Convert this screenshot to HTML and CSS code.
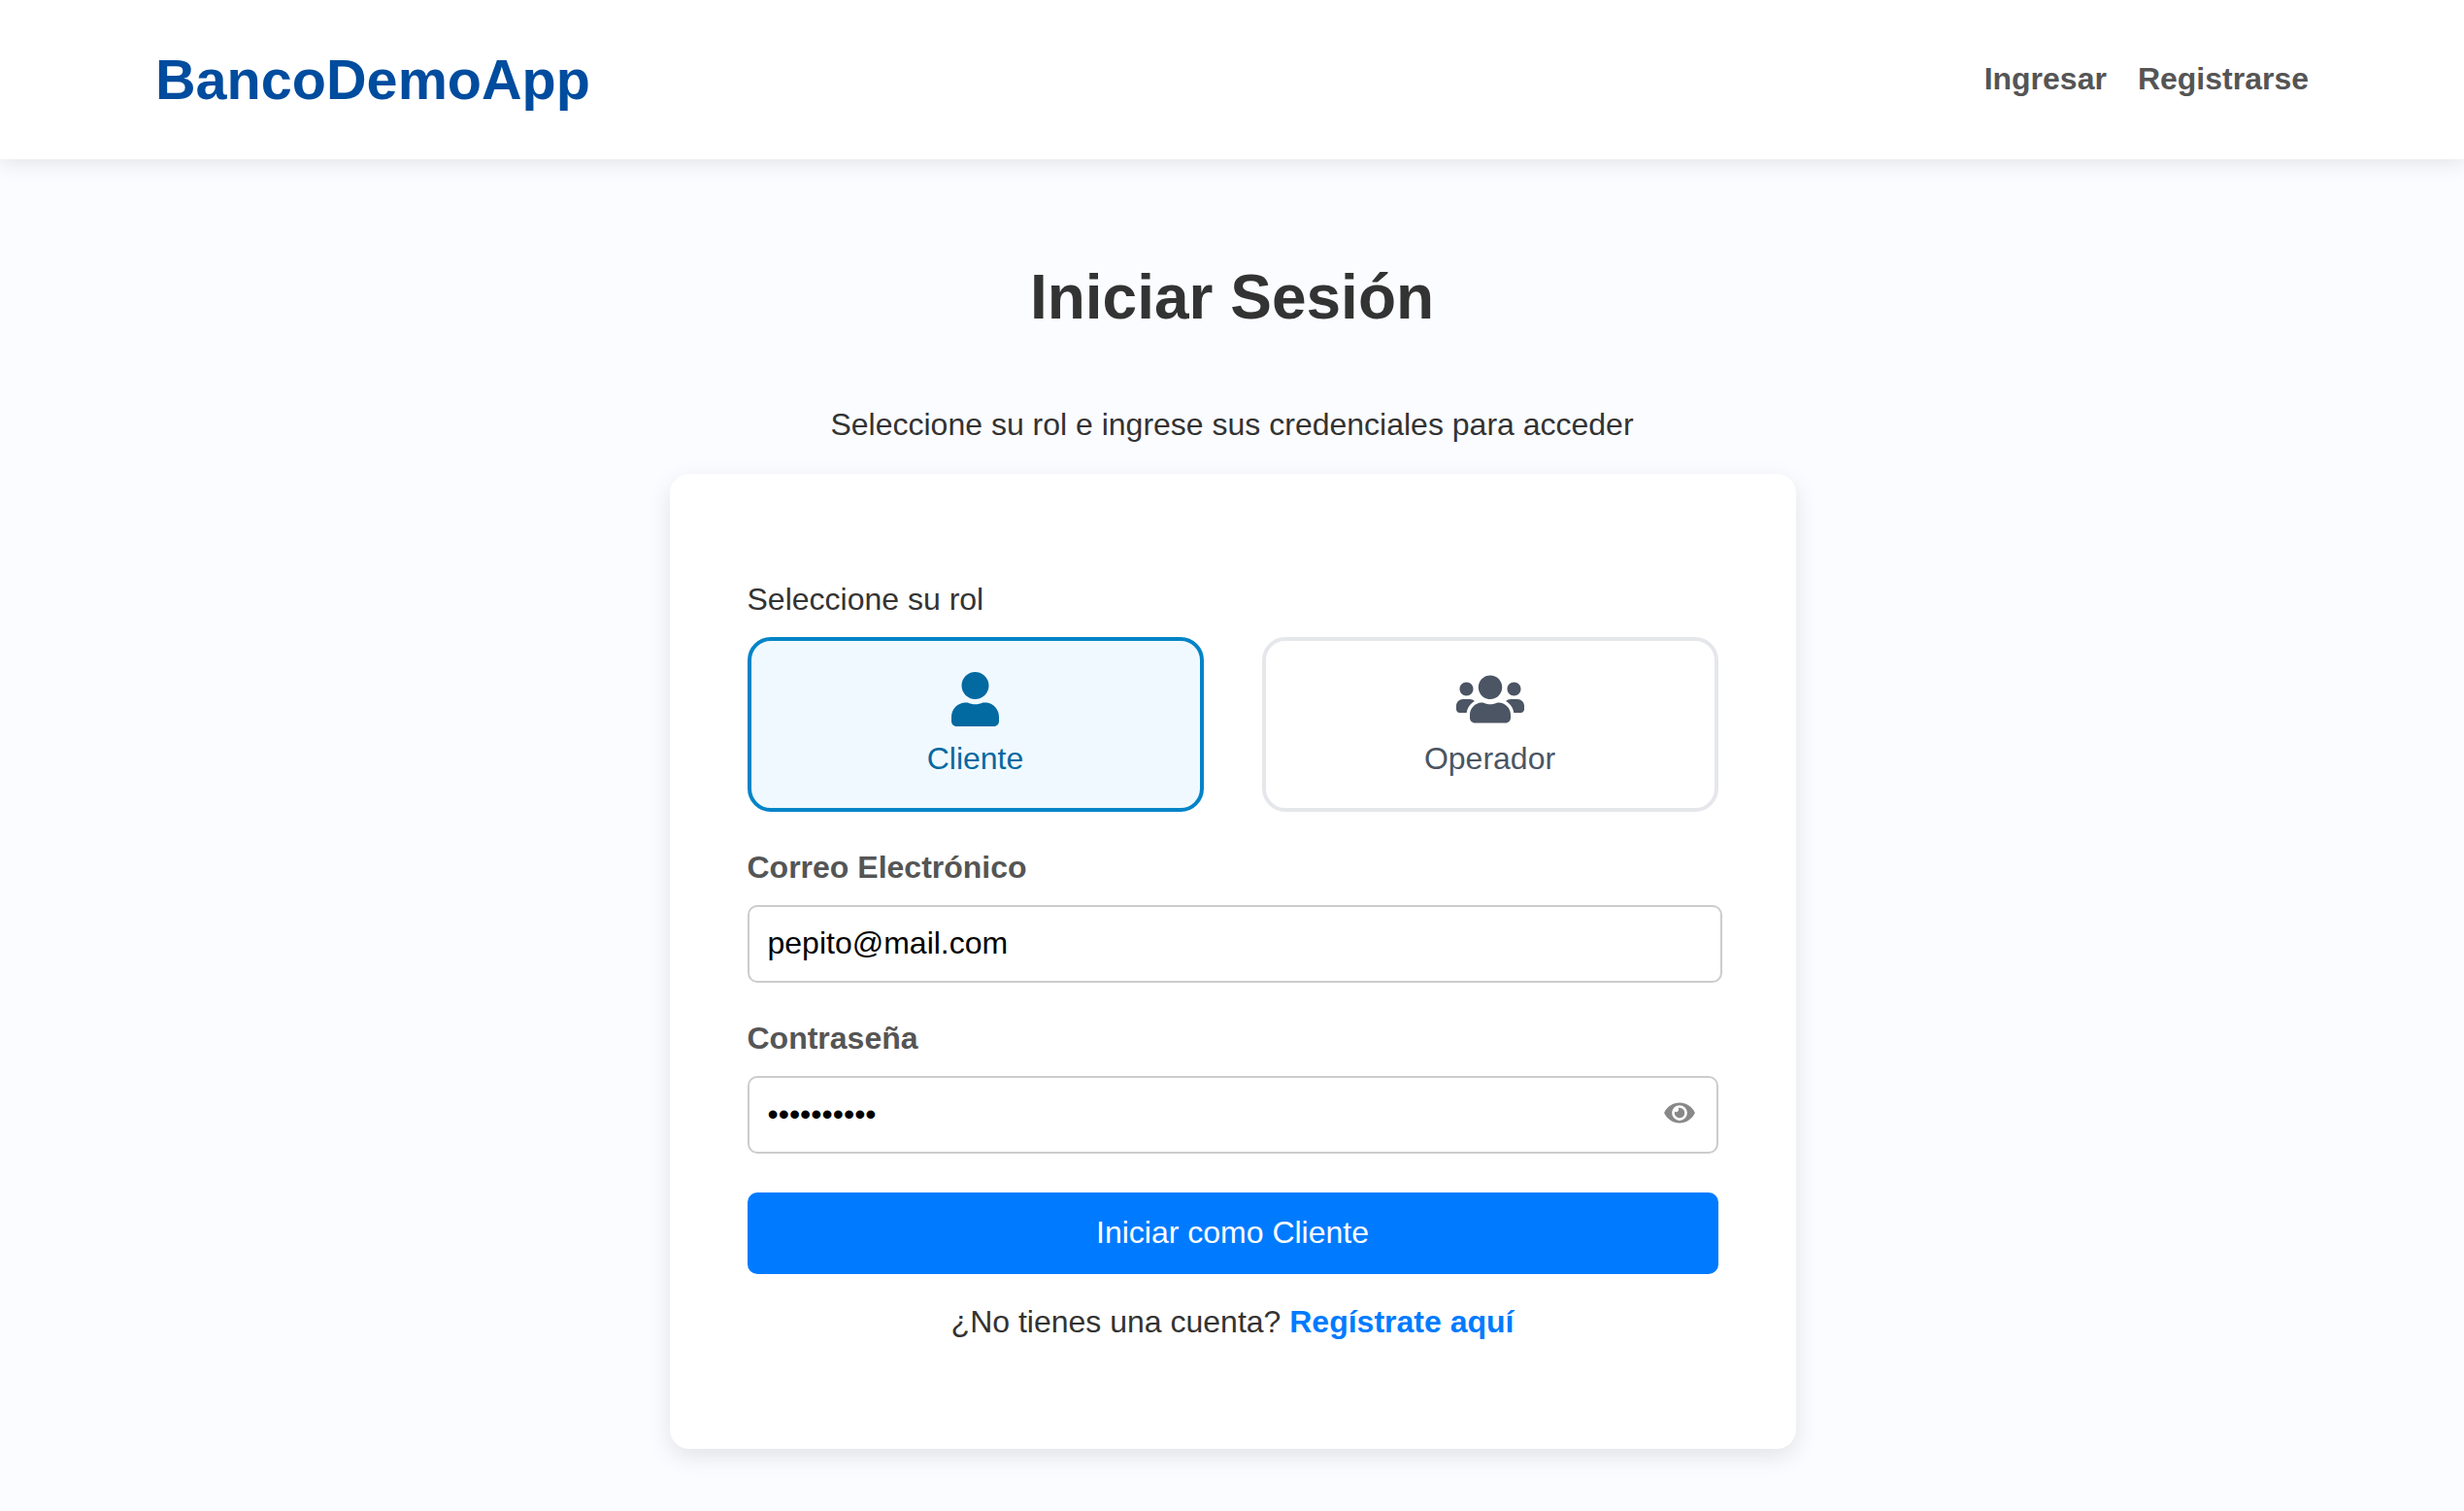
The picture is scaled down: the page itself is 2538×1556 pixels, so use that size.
FILE: index.html
```html
<!DOCTYPE html>
<html lang="es">
<head>
<meta charset="utf-8">
<title>BancoDemoApp</title>
<link rel="stylesheet" href="styles.css">
</head>
<body>
<header class="header">
  <div class="logo">BancoDemoApp</div>
  <nav class="nav">
    <a href="#">Ingresar</a>
    <a href="#">Registrarse</a>
  </nav>
</header>
<main class="main">
  <h1 class="title">Iniciar Sesión</h1>
  <p class="subtitle">Seleccione su rol e ingrese sus credenciales para acceder</p>
  <form class="card">
    <div class="role-label">Seleccione su rol</div>
    <div class="roles">
      <button type="button" class="role role-active">
        <svg class="role-icon" viewBox="0 0 448 512" width="49" height="56"><path fill="currentColor" d="M224 256c70.7 0 128-57.3 128-128S294.7 0 224 0 96 57.3 96 128s57.3 128 128 128zm89.6 32h-16.7c-22.2 10.2-46.9 16-72.9 16s-50.6-5.8-72.9-16h-16.7C60.2 288 0 348.2 0 422.4V464c0 26.5 21.5 48 48 48h352c26.5 0 48-21.5 48-48v-41.6c0-74.2-60.2-134.4-134.4-134.4z"/></svg>
        <span>Cliente</span>
      </button>
      <button type="button" class="role">
        <svg class="role-icon" viewBox="0 0 640 512" width="70" height="56"><path fill="currentColor" d="M96 224c35.3 0 64-28.7 64-64s-28.7-64-64-64-64 28.7-64 64 28.7 64 64 64zm448 0c35.3 0 64-28.7 64-64s-28.7-64-64-64-64 28.7-64 64 28.7 64 64 64zm32 32h-64c-17.6 0-33.5 7.1-45.1 18.6 40.3 22.1 68.9 62 75.1 109.4h66c17.7 0 32-14.3 32-32v-32c0-35.3-28.7-64-64-64zm-256 0c61.9 0 112-50.1 112-112S381.9 32 320 32 208 82.1 208 144s50.1 112 112 112zm76.8 32h-8.3c-20.8 10-43.9 16-68.5 16s-47.6-6-68.5-16h-8.3C179.6 288 128 339.6 128 403.2V432c0 26.5 21.5 48 48 48h288c26.5 0 48-21.5 48-48v-28.8c0-63.6-51.6-115.2-115.2-115.2zm-223.7-13.4C161.5 263.1 145.6 256 128 256H64c-35.3 0-64 28.7-64 64v32c0 17.7 14.3 32 32 32h65.9c6.3-47.4 34.9-87.3 75.2-109.4z"/></svg>
        <span>Operador</span>
      </button>
    </div>
    <label class="label" for="email">Correo Electrónico</label>
    <input class="input input-email" id="email" type="text" value="pepito@mail.com">
    <label class="label label-password" for="password">Contraseña</label>
    <div class="password">
      <input class="input" id="password" type="password" value="pepito1234">
      <svg class="eye" viewBox="0 0 576 512" width="32" height="28"><path fill="currentColor" d="M572.52 241.4C518.29 135.59 410.93 64 288 64S57.68 135.64 3.48 241.41a32.35 32.35 0 0 0 0 29.19C57.71 376.41 165.07 448 288 448s230.32-71.64 284.52-177.41a32.35 32.35 0 0 0 0-29.19zM288 400a144 144 0 1 1 144-144 143.93 143.93 0 0 1-144 144zm0-240a95.31 95.31 0 0 0-25.31 3.79 47.85 47.85 0 0 1-66.9 66.9A95.78 95.78 0 1 0 288 160z"/></svg>
    </div>
    <button type="button" class="submit">Iniciar como Cliente</button>
    <p class="signup">¿No tienes una cuenta? <a href="#">Regístrate aquí</a></p>
  </form>
</main>
</body>
</html>
```
FILE: styles.css
```css
* {
  box-sizing: border-box;
}

body {
  margin: 0;
  background: #fbfcff;
  color: #333;
  font: 32px/36px Arial, "Liberation Sans", sans-serif;
}

a {
  text-decoration: none;
}

.header {
  position: relative;
  display: flex;
  justify-content: space-between;
  align-items: flex-start;
  height: 164px;
  padding: 50px 160px;
  background: #fff;
  box-shadow: 0 4px 20px rgba(0, 0, 0, 0.1);
}

.logo {
  color: #004c9e;
  font-size: 57.6px;
  font-weight: bold;
  line-height: 64px;
}

.nav {
  display: flex;
  gap: 32px;
  padding-top: 13px;
}

.nav a {
  color: #555;
  font-weight: bold;
}

.main {
  display: flex;
  flex-direction: column;
  align-items: center;
  padding: 106px 0 64px;
}

.title {
  margin: 0;
  font-size: 64px;
  line-height: 72px;
}

.subtitle {
  margin: 77px 0 33px;
}

.card {
  display: flex;
  flex-direction: column;
  width: 1160px;
  height: 1004px;
  margin-left: 1px;
  padding: 111px 80px 0;
  background: #fff;
  border-radius: 20px;
  box-shadow: 0 8px 24px rgba(0, 0, 0, 0.1);
}

.roles {
  display: grid;
  grid-template-columns: 1fr 1fr;
  gap: 60px;
  margin-top: 21px;
}

.role {
  display: flex;
  flex-direction: column;
  align-items: center;
  height: 180px;
  padding: 32px 0 0;
  border: 4px solid #e5e7eb;
  border-radius: 24px;
  background: #fff;
  color: #4b5563;
  font: inherit;
  gap: 15px;
}

.role-active {
  border-color: #0284c7;
  background: #f0f9ff;
  color: #0369a1;
}

.role-icon {
  display: block;
}

.label {
  margin: 39px 0 21px;
  color: #555;
  font-weight: bold;
}

.input {
  display: block;
  width: 100%;
  height: 80px;
  padding: 0 19px 2px;
  border: 2px solid #ccc;
  border-radius: 10px;
  background: #fff;
  color: #000;
  font: inherit;
  outline: none;
}

.input-email {
  width: 1004px;
}

.password {
  position: relative;
}

.eye {
  position: absolute;
  top: 24px;
  right: 24px;
  color: #888;
}

.submit {
  height: 84px;
  margin-top: 40px;
  padding: 0 0 2px;
  border: 0;
  border-radius: 10px;
  background: #007bff;
  color: #fff;
  font: inherit;
}

.signup {
  margin: 31px 0 0;
  text-align: center;
}

.signup a {
  color: #007bff;
  font-weight: bold;
}
```
